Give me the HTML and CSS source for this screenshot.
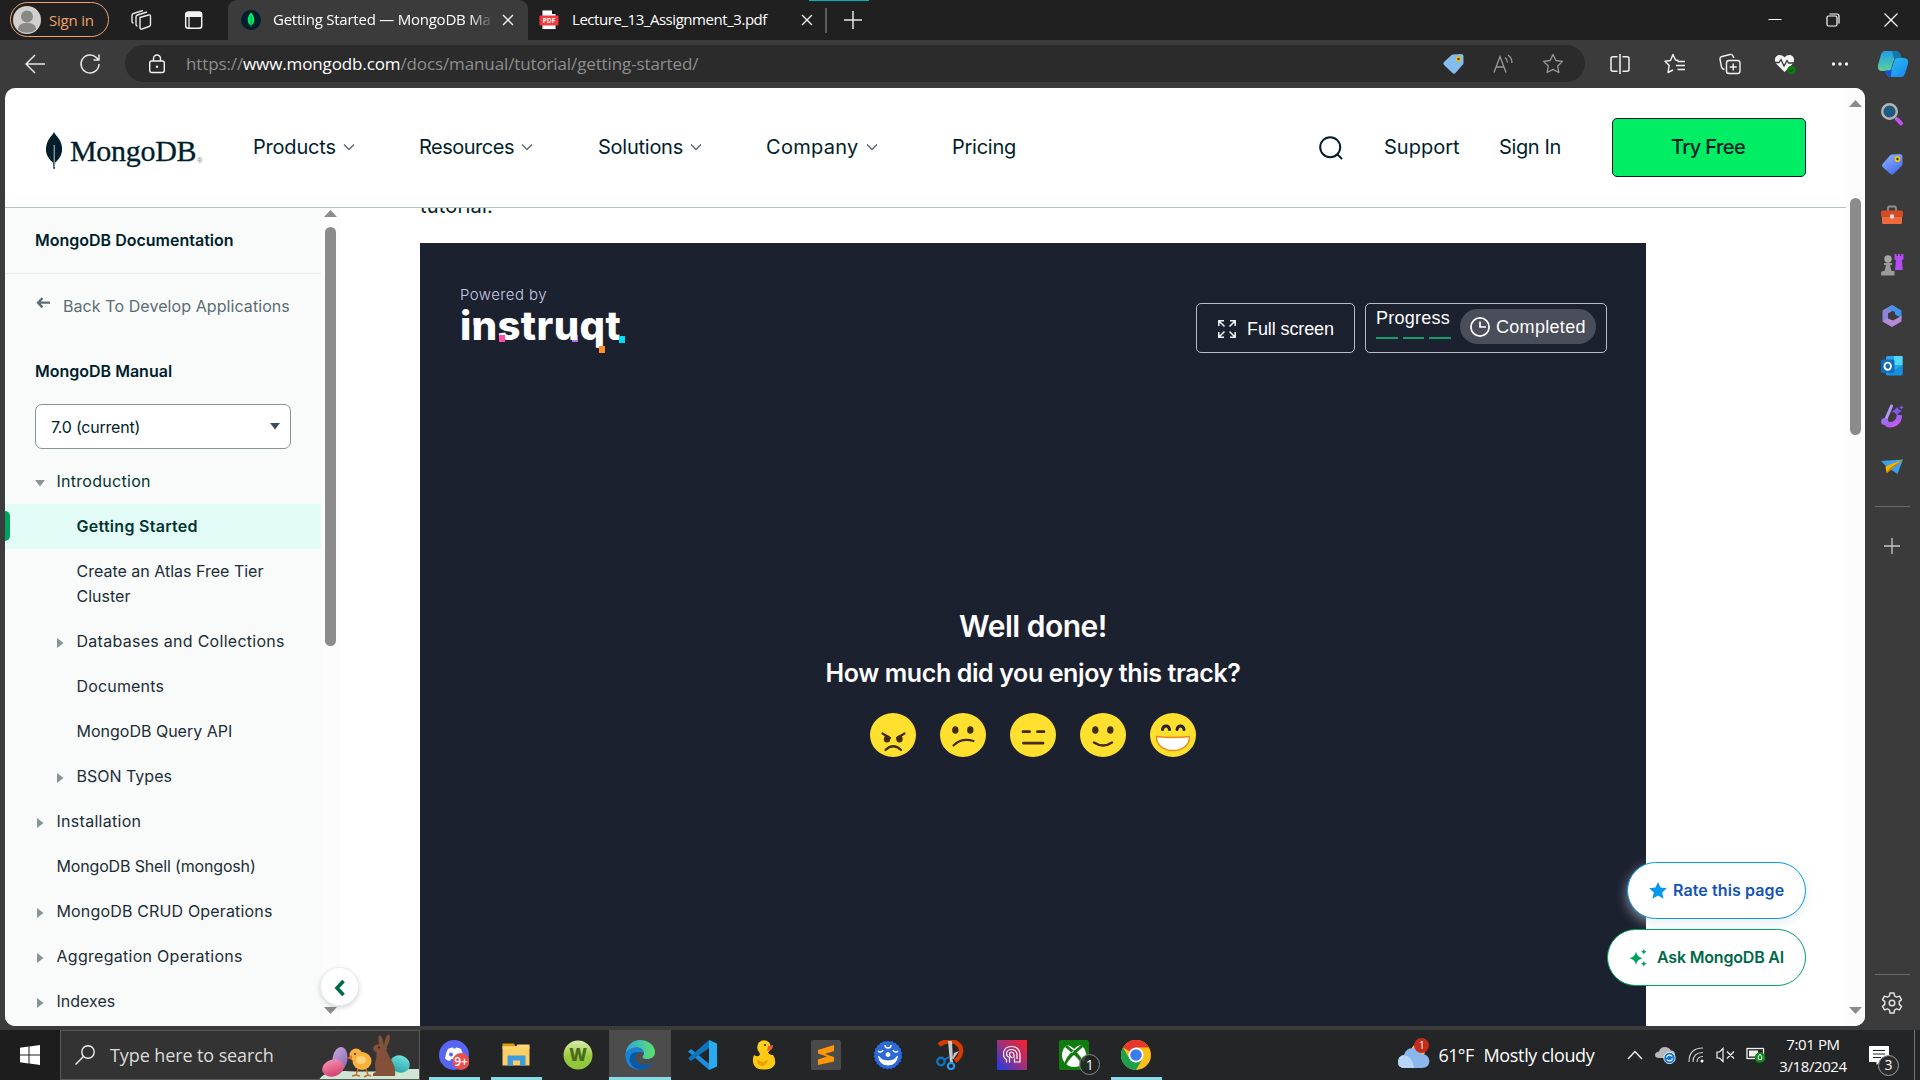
FILE: index.html
```
<!DOCTYPE html>
<html lang="en">
<head>
<meta charset="utf-8">
<title>Getting Started — MongoDB Manual</title>
<link rel="stylesheet" href="styles.css">
</head>
<body>
<svg class="defs" width="0" height="0">
  <defs>
    <linearGradient id="gTag" x1="0" y1="0" x2=".6" y2="1"><stop offset="0" stop-color="#8fb8ff"/><stop offset="1" stop-color="#4b6cf0"/></linearGradient>
    <linearGradient id="gCopA" x1="0" y1="0" x2="0" y2="1"><stop offset="0" stop-color="#1f9de8"/><stop offset="1" stop-color="#5fd09a"/></linearGradient>
    <linearGradient id="gCopB" x1="0" y1="0" x2="1" y2="1"><stop offset="0" stop-color="#2ac3f2"/><stop offset="1" stop-color="#1a86f0"/></linearGradient>
    <linearGradient id="gPurple" x1="0" y1="0" x2="1" y2="1"><stop offset="0" stop-color="#6b5cf0"/><stop offset="1" stop-color="#d65cf5"/></linearGradient>
    <linearGradient id="gEdge" x1="0" y1="0" x2="1" y2="0"><stop offset="0" stop-color="#2aa9e6"/><stop offset="1" stop-color="#5ee06a"/></linearGradient>
    <linearGradient id="gHead" x1="0" y1="1" x2="1" y2="0"><stop offset="0" stop-color="#1a3cf0"/><stop offset=".5" stop-color="#a0307a"/><stop offset="1" stop-color="#ff1f2a"/></linearGradient>
    <linearGradient id="gW" x1="0" y1="0" x2="0" y2="1"><stop offset="0" stop-color="#d9ecb0"/><stop offset=".55" stop-color="#9acb3c"/><stop offset="1" stop-color="#8cc63f"/></linearGradient>
    <linearGradient id="gPink" x1="0" y1="0" x2="0" y2="1"><stop offset="0" stop-color="#f48fb1"/><stop offset="1" stop-color="#d2406f"/></linearGradient>
    <linearGradient id="gLil" x1="0" y1="0" x2="1" y2="1"><stop offset="0" stop-color="#c9a8e0"/><stop offset="1" stop-color="#8a63ad"/></linearGradient>
    <linearGradient id="gTeal" x1="0" y1="0" x2="0" y2="1"><stop offset="0" stop-color="#6fe0dc"/><stop offset="1" stop-color="#2aa5ac"/></linearGradient>
  </defs>
</svg>

<div class="tabstrip">
  <div class="signin">
    <svg width="28" height="28" viewBox="0 0 28 28"><circle cx="14" cy="14" r="14" fill="#d2d0ce"/><circle cx="14" cy="10.5" r="6" fill="#8a8886"/><path d="M5 23.5c0-5 4-6.500 9-6.500s9 1.500 9 6.500A14 14 0 0 1 5 23.500z" fill="#8a8886"/></svg>
    <span>Sign in</span>
  </div>
  <span class="ico workspaces"><svg width="22" height="22" viewBox="0 0 22 22" fill="none" stroke="#e8e8e8" stroke-width="1.400"><path d="M10 8.500 18.500 6q2-.5 2 1.500v8q0 1.500-1.500 2l-7 2.500q-2 .5-2-1.500z"/><path d="M7.500 17q-1.500 0-1.500-1.500V8q0-1.500 1.500-2L17 3M3.500 14Q2 14 2 12.500V6.500Q2 5 3.500 4.500L13 1.500"/></svg></span>
  <span class="ico actions"><svg width="20" height="20" viewBox="0 0 20 20"><rect x="1.700" y="2.200" width="16" height="16" rx="2.500" fill="none" stroke="#f2f2f2" stroke-width="1.500"/><path d="M1.500 7V4q0-2.500 2.500-2.500h11.500Q18 1.500 18 4v3z" fill="#f2f2f2"/><path d="M5 7v11" stroke="#f2f2f2" stroke-width="1.300"/></svg></span>
  <div class="tab active">
    <svg width="20" height="20" viewBox="0 0 20 20"><circle cx="10" cy="10" r="10" fill="#001e2b"/><path d="M10 2.500c2.500 3 3.300 5 3.300 7.500 0 2.700-1.500 4.300-2.900 5.300L10.200 17h-.4l-.2-1.700C8.200 14.300 6.700 12.700 6.700 10c0-2.500.8-4.500 3.300-7.500z" fill="#00ed64"/><path d="M10.200 6v10" stroke="#00684a" stroke-width=".6"/></svg>
    <span class="tabtitle">Getting Started — MongoDB Ma</span>
    <svg class="close" width="12" height="12" viewBox="0 0 12 12" stroke="#f2f2f2" stroke-width="1.300"><path d="M1 1l10 10M11 1 1 11"/></svg>
  </div>
  <div class="tab">
    <svg width="20" height="20" viewBox="0 0 20 20"><path d="M3 0h10l4 4v15.500H3z" fill="#fff" stroke="#111" stroke-width=".8"/><path d="M13 0v4h4" fill="#111"/><rect x=".5" y="5.500" width="19" height="10" rx="1" fill="#f23a3a"/><text x="10" y="13" text-anchor="middle" class="pdf">PDF</text></svg>
    <span class="tabtitle2">Lecture_13_Assignment_3.pdf</span>
    <svg class="close" width="12" height="12" viewBox="0 0 12 12" stroke="#f2f2f2" stroke-width="1.300"><path d="M1 1l10 10M11 1 1 11"/></svg>
  </div>
  <span class="tabsep"></span>
  <span class="ico newtab"><svg width="18" height="18" viewBox="0 0 18 18" stroke="#e6e6e6" stroke-width="1.500"><path d="M9 0v18M0 9h18"/></svg></span>
  <div class="winbtns">
    <span class="ico"><svg width="14" height="14" viewBox="0 0 14 14"><path d="M.5 6.500h13" stroke="#fff"/></svg></span>
    <span class="ico"><svg width="14" height="14" viewBox="0 0 14 14" fill="none" stroke="#fff" stroke-width="1.200"><rect x="1" y="3" width="10" height="10" rx="1.500"/><path d="M3.500 1h7.500q2 0 2 2v7.500"/></svg></span>
    <span class="ico"><svg width="14" height="14" viewBox="0 0 14 14" stroke="#fff" stroke-width="1.200"><path d="M.5.500l13 13M13.500.500l-13 13"/></svg></span>
  </div>
  <span class="teal"></span>
</div>

<div class="toolbar">
  <span class="ico back"><svg width="20" height="20" viewBox="0 0 20 20" fill="none" stroke="#e6e6e6" stroke-width="1.500"><path d="M10 1 1 10l9 9M1 10h19"/></svg></span>
  <span class="ico reload"><svg width="22" height="22" viewBox="0 0 22 22" fill="none" stroke="#e6e6e6" stroke-width="1.500"><path d="M20 11a9 9 0 1 1-2.600-6.400L20 7M20 1.500V7h-5.500"/></svg></span>
  <div class="address">
    <span class="ico lock"><svg width="18" height="20" viewBox="0 0 18 20" fill="none" stroke="#f2f2f2" stroke-width="1.400"><rect x="1.700" y="7" width="14.600" height="11.500" rx="2"/><path d="M5.500 7V4.500a3.500 3.500 0 0 1 7 0V7"/><circle cx="9" cy="12.700" r="1.200" fill="#f2f2f2" stroke="none"/></svg></span>
    <span class="url">https://<b>www.mongodb.com</b>/docs/manual/tutorial/getting-started/</span>
    <span class="ico a1"><svg width="22" height="22" viewBox="0 0 22 22"><path d="M11 1.500 19 1q2.500 0 2.500 2v7q0 1-1 2l-7 8q-1.500 1.500-3 0l-8.500-8q-1.500-1.500 0-3l7-6.500q1-1 2-1z" fill="#83bcee"/><circle cx="16.500" cy="6" r="2.800" fill="#f2c100"/><circle cx="16.500" cy="6" r="1.200" fill="#4a3a00"/></svg></span>
    <span class="ico a2"><svg width="22" height="20" viewBox="0 0 22 20" fill="none" stroke="#9a9a9a" stroke-width="1.300"><path d="m2 18.500 6-16 6 16M4 13h8M13 3.500q2.500 2 2.500 5M16 1q4 3 4 8"/></svg></span>
    <span class="ico a3"><svg width="22" height="22" viewBox="0 0 22 22" fill="none" stroke="#9a9a9a" stroke-width="1.300" stroke-linejoin="round"><path d="m11 1.500 2.900 6 6.600.9-4.800 4.600 1.200 6.500-5.900-3.100-5.900 3.100 1.200-6.500L1.500 8.400l6.600-.9z"/></svg></span>
  </div>
  <div class="tools">
    <span class="ico"><svg width="20" height="20" viewBox="0 0 20 20" fill="none" stroke="#f2f2f2" stroke-width="1.500"><path d="M7.500 2.700H3q-2 0-2 2v10.600q0 2 2 2h4.500M12.500 2.700H17q2 0 2 2v10.600q0 2-2 2h-4.500M10 0v20"/></svg></span>
    <span class="ico"><svg width="22" height="22" viewBox="0 0 22 22" fill="none" stroke="#f2f2f2" stroke-width="1.400" stroke-linejoin="round"><path d="M14.500 7.500 11.500 7 9 1.500 6.500 7.500l-5.500.700L5.200 12.500 4 19.500l5-2.500"/><path d="M13.500 8.500H21M12 12.500h9M13.500 16.500H21"/></svg></span>
    <span class="ico"><svg width="22" height="22" viewBox="0 0 22 22" fill="none" stroke="#f2f2f2" stroke-width="1.400"><rect x="7.500" y="7.500" width="13.500" height="13" rx="2.500"/><path d="M14.200 10.500v7M10.700 14h7M5.500 16.500Q3 16 2.500 14L1 6.500Q.7 4 3 3.500L11 1.500q2.500-.5 3.300 2l.4 1.500"/></svg></span>
    <span class="ico"><svg width="22" height="22" viewBox="0 0 22 22"><path d="M10.500 19 2 10.500C-.5 7 1.500 2 5.500 2 8 2 9.500 3 10.500 4.500 11.500 3 13 2 15.500 2c4 0 6 5 3.500 8.500z" fill="#f4f4f4"/><path d="M1 9.500h4l2-3 3 6.500 3-5.500 1.500 2.500H20" fill="none" stroke="#3b3b3b" stroke-width="1.300"/><circle cx="17.500" cy="17" r="4.300" fill="#0f7b10"/><path d="m15.500 17 1.500 1.500 2.700-2.700" fill="none" stroke="#0a3d0a"/></svg></span>
    <span class="ico"><svg width="18" height="6" viewBox="0 0 18 6" fill="#f2f2f2"><circle cx="2.500" cy="3" r="1.700"/><circle cx="9" cy="3" r="1.700"/><circle cx="15.500" cy="3" r="1.700"/></svg></span>
  </div>
  <span class="ico copilot"><svg width="32" height="28" viewBox="0 0 32 28"><path d="M8 1h10q4 0 5.500 4l1 3h-5q-2 0-3 3l-2.500 8q-.7 2-2.500 2H5q-5 0-4-6L4 4.500Q5 1 8 1z" fill="url(#gCopA)"/><path d="M24 27H14q-4 0-5.500-5l-.5-1.500h4q2 0 3-3l2.500-7.500q1-2 3-2H27q5 0 4 6l-3 9.500q-1 3.500-4 3.500z" fill="url(#gCopB)"/><path d="M18 1q4 0 5.500 4l1 3h-5q-2 0-2.500 1L15 1z" fill="#1378a8"/><path d="M14 27q-4 0-5.500-5l-.5-1.500h4q2 0 2.700-2z" fill="#1b4fd0"/></svg></span>
</div>

<div class="middle">
  <div class="page">
    <div class="content">
      <header class="header">
        <div class="logo">
          <svg width="18" height="38" viewBox="0 0 18 38"><path d="M9 0c1.500 3 3 4 5 7 3.500 5.500 4 12 1.500 17-1.500 3-3.500 5-5.200 6.300L9.700 37H8.500l-.7-6.700C6 29 4 27 2.500 24 0 19 .7 12.500 4 7 6 4 7.500 3 9 0z" fill="#001e2b"/><path d="M9.200 13v22" stroke="#cfd6d9" stroke-width=".9"/></svg>
          <span class="word">MongoDB</span><span class="reg">®</span>
        </div>
        <nav class="nav">
          <a class="n1">Products <svg class="chev" width="12" height="8" viewBox="0 0 12 8"><path d="m1 1.500 5 5 5-5"/></svg></a>
          <a class="n2">Resources <svg class="chev" width="12" height="8" viewBox="0 0 12 8"><path d="m1 1.500 5 5 5-5"/></svg></a>
          <a class="n3">Solutions <svg class="chev" width="12" height="8" viewBox="0 0 12 8"><path d="m1 1.500 5 5 5-5"/></svg></a>
          <a class="n4">Company <svg class="chev" width="12" height="8" viewBox="0 0 12 8"><path d="m1 1.500 5 5 5-5"/></svg></a>
          <a class="n5">Pricing</a>
        </nav>
        <div class="actionsbar">
          <svg class="search" width="24" height="24" viewBox="0 0 24 24" fill="none" stroke="#001e2b" stroke-width="2"><circle cx="11.200" cy="11.200" r="10"/><path d="m18 18 5 5"/></svg>
          <a class="support">Support</a>
          <a class="login">Sign In</a>
          <a class="try">Try Free</a>
        </div>
      </header>
      <div class="body">
        <aside class="toc">
          <div class="toctitle">MongoDB Documentation</div>
          <div class="backlink"><svg width="15" height="12" viewBox="0 0 15 12" fill="none" stroke="#5c6c75" stroke-width="2.300"><path d="M6.500 1 2 5.700l4.500 4.700M2 5.700h12"/></svg><span>Back To Develop Applications</span></div>
          <div class="manual">MongoDB Manual</div>
          <div class="select"><span>7.0 (current)</span><svg width="10" height="7" viewBox="0 0 10 7"><path d="M0 0h10L5 6.500z" fill="#3d4f58"/></svg></div>
          <div class="item open w3"><svg width="10" height="7" viewBox="0 0 10 7"><path d="M0 0h10L5 6.500z"/></svg>Introduction</div>
          <div class="item sub current w3">Getting Started</div>
          <div class="item sub two">Create an Atlas Free Tier<br>Cluster</div>
          <div class="item sub w3"><svg width="7" height="10" viewBox="0 0 7 10"><path d="M0 0v10l6.500-5z"/></svg>Databases and Collections</div>
          <div class="item sub w2">Documents</div>
          <div class="item sub">MongoDB Query API</div>
          <div class="item sub"><svg width="7" height="10" viewBox="0 0 7 10"><path d="M0 0v10l6.500-5z"/></svg>BSON Types</div>
          <div class="item w3"><svg width="7" height="10" viewBox="0 0 7 10"><path d="M0 0v10l6.500-5z"/></svg>Installation</div>
          <div class="item wn">MongoDB Shell (mongosh)</div>
          <div class="item w2"><svg width="7" height="10" viewBox="0 0 7 10"><path d="M0 0v10l6.500-5z"/></svg>MongoDB CRUD Operations</div>
          <div class="item w3"><svg width="7" height="10" viewBox="0 0 7 10"><path d="M0 0v10l6.500-5z"/></svg>Aggregation Operations</div>
          <div class="item"><svg width="7" height="10" viewBox="0 0 7 10"><path d="M0 0v10l6.500-5z"/></svg>Indexes</div>
        </aside>
        <div class="tocscroll">
          <svg width="13" height="7" viewBox="0 0 13 7"><path d="M6.500 0 13 7H0z" fill="#8b8b8b"/></svg>
          <i></i>
          <svg class="down" width="13" height="7" viewBox="0 0 13 7"><path d="M6.500 7 13 0H0z" fill="#8b8b8b"/></svg>
          <div class="collapse"><svg width="12" height="18" viewBox="0 0 12 18" fill="none" stroke="#00684a" stroke-width="3.600"><path d="M9.500 2 3 9l6.500 7"/></svg></div>
        </div>
        <main class="doc">
          <p class="lead"><span>tutorial.</span></p>
          <section class="track">
            <div class="trackhead">
              <div class="brand">
                <span class="powered">Powered by</span>
                <div class="instruqt"><i class="sq s4"></i><i class="sq s5"></i><span>instruqt</span><i class="sq s1"></i><i class="sq s2"></i><i class="sq s3"></i></div>
              </div>
              <div class="full">
                <svg width="18" height="18" viewBox="0 0 18 18" fill="none" stroke="#f2f4f8" stroke-width="1.500"><path d="M.8 6V.800H6M12 .8h5.200V6M17.200 12v5.200H12M6 17.200H.8V12M1 1l5.500 5.500M17 1l-5.500 5.500M17 17l-5.500-5.500M1 17l5.500-5.500"/></svg>
                <span>Full screen</span>
              </div>
              <div class="progress">
                <div class="ptext"><span>Progress</span><div class="bars"><i></i><i></i><i></i></div></div>
                <div class="pill"><svg width="20" height="20" viewBox="0 0 20 20" fill="none" stroke="#fff" stroke-width="1.700"><circle cx="10" cy="10" r="9.100"/><path d="M10 4.500V10h6"/></svg><span>Completed</span></div>
              </div>
            </div>
            <h2>Well done!</h2>
            <h3>How much did you enjoy this track?</h3>
            <div class="faces">
              <svg viewBox="0 0 46 44"><ellipse cx="23" cy="22" rx="23" ry="22" fill="#ffe02f"/><g fill="#422b0d"><ellipse cx="17" cy="26" rx="3.200" ry="3.500"/><ellipse cx="29.500" cy="26" rx="3.200" ry="3.500"/></g><path d="m12.500 20.500 7.500 4.500M34.500 20.500 27 25M15.500 37q7.700-7.500 15.500 0" fill="none" stroke="#422b0d" stroke-width="2.200" stroke-linecap="round"/></svg>
              <svg viewBox="0 0 46 44"><ellipse cx="23" cy="22" rx="23" ry="22" fill="#ffe02f"/><g fill="#422b0d"><ellipse cx="15.300" cy="17" rx="3.200" ry="3.800"/><ellipse cx="30.300" cy="17" rx="3.200" ry="3.800"/></g><path d="M13.500 32.500q8-8 20-4.500" fill="none" stroke="#422b0d" stroke-width="2.200" stroke-linecap="round"/></svg>
              <svg viewBox="0 0 46 44"><ellipse cx="23" cy="22" rx="23" ry="22" fill="#ffe02f"/><path d="M13 18.700h6.500M27.500 18.700H34M13.500 30.200h19.500" fill="none" stroke="#422b0d" stroke-width="2.800" stroke-linecap="round"/></svg>
              <svg viewBox="0 0 46 44"><ellipse cx="23" cy="22" rx="23" ry="22" fill="#ffe02f"/><g fill="#422b0d"><ellipse cx="15.300" cy="17" rx="3.200" ry="3.800"/><ellipse cx="30.300" cy="17" rx="3.200" ry="3.800"/></g><path d="M14 29.500q9 6 18 0" fill="none" stroke="#422b0d" stroke-width="2.400" stroke-linecap="round"/></svg>
              <svg viewBox="0 0 46 44"><ellipse cx="23" cy="22" rx="23" ry="22" fill="#ffe02f"/><path d="M12.500 16.500q.5-3.500 3.500-3.500t3.500 3.500M27 16.500q.5-3.500 3.500-3.500t3.500 3.500" fill="none" stroke="#2a2020" stroke-width="3" stroke-linecap="round"/><path d="M6.500 23.500q16.500 2 33 0c.5 8.500-7.500 14-16.500 14s-17-5.500-16.500-14z" fill="#fff" stroke="#ee8a12" stroke-width="1.400"/></svg>
            </div>
          </section>
        </main>
        <div class="float rate"><svg width="18" height="17" viewBox="0 0 18 17"><path d="m9 0 2.500 5.600 6.300.6-4.600 4.200 1.300 6.300L9 13.500l-5.500 3.200 1.300-6.300L.2 6.200l6.300-.6z" fill="#0498ec"/></svg><span>Rate this page</span></div>
        <div class="float ask"><svg width="18" height="18" viewBox="0 0 18 18" fill="#00a35c"><path d="M7 2.500Q8 8 13.500 9.200 8 10.500 7 16 6 10.500.500 9.200 6 8 7 2.500zM14.800 0q.5 2.300 2.700 2.800-2.200.5-2.700 2.700-.5-2.200-2.700-2.700 2.200-.5 2.700-2.800zM14.800 12q.5 2.300 2.700 2.800-2.200.5-2.700 2.700-.5-2.200-2.700-2.700 2.200-.5 2.700-2.800z"/></svg><span>Ask MongoDB AI</span></div>
      </div>
    </div>
    <div class="pagescroll">
      <svg width="13" height="7" viewBox="0 0 13 7"><path d="M6.500 0 13 7H0z" fill="#8b8b8b"/></svg>
      <i></i>
      <svg class="down" width="13" height="7" viewBox="0 0 13 7"><path d="M6.500 7 13 0H0z" fill="#8b8b8b"/></svg>
    </div>
  </div>
  <div class="sidebar">
    <svg viewBox="0 0 24 24"><circle cx="9.500" cy="9.500" r="7.300" fill="#1f5a80" stroke="#b4b4b4" stroke-width="2.400"/><path d="m15.500 16 2 2" stroke="#b4b4b4" stroke-width="2.500"/><path d="m17.500 17.500 3.500 3.800" stroke="#c94df0" stroke-width="4" stroke-linecap="round"/></svg>
    <svg viewBox="0 0 24 24"><path d="M12 2.500 19.500 2q3 0 3 2.500v7q0 1.500-1 2.500l-8 8q-1.500 1.500-3 0L2.500 15Q1 13.500 2.500 12L10 3.500q1-1 2-1z" fill="url(#gTag)"/><circle cx="17.500" cy="7" r="2.900" fill="#f5c800"/><circle cx="17.500" cy="7" r="1.200" fill="#423800"/></svg>
    <svg viewBox="0 0 24 24"><path d="M8 8V5q0-1.500 1.500-1.500h5Q16 3.500 16 5v3" fill="none" stroke="#8f8f8f" stroke-width="1.800"/><path d="M1 9q0-1.500 1.500-1.500h19Q23 7.500 23 9v4.500H1z" fill="#d84c24"/><path d="M2 13.500h20v6q0 1.500-1.500 1.500h-17Q2 21 2 19.500z" fill="#f0693b"/><rect x="10" y="11.500" width="4" height="4" rx="1" fill="#e0e0e0"/></svg>
    <svg viewBox="0 0 24 24"><path d="M14.500 1h2.200v2H18V1h2v2h1.300V1h2.200v5l-1.500 1.500L22.700 17H15l1-9.500L14.500 6z" fill="#b64df2"/><circle cx="8" cy="6" r="3.700" fill="#a8a8a8"/><path d="M4 10h8v2h-2l1.500 6h3v4.500H1V20q0-1.500 2-2h1.500L6 12H4z" fill="#9a9a9a"/></svg>
    <svg viewBox="0 0 24 24"><path d="M12 1 2.500 6.500v11L8 20.500v-11L17 4z" fill="#8d85d8"/><path d="m12 1 9.500 5.500V14L15 10.500V8L8 5z" fill="#3f95ee"/><path d="M21.500 12v5.500L12 23l-9.500-5.500L8 14.500l5 2z" fill="#b68ad8"/><path d="m12 8.500 3.500 2v3.500L12 16l-3.500-2v-3.500z" fill="#3b3b3b"/></svg>
    <svg viewBox="0 0 24 24"><rect x="6" y="2" width="16.500" height="19" rx="1.500" fill="#28a8ea"/><path d="M14 2h8.500v9H14z" fill="#50d9ff"/><path d="M6 21 22.500 11v9q0 1.500-1.500 1.500H7z" fill="#1490df"/><rect x="1" y="5.500" width="13.500" height="13.500" rx="1.500" fill="#0f6cbd"/><ellipse cx="7.700" cy="12.200" rx="3.200" ry="3.600" fill="none" stroke="#fff" stroke-width="1.900"/></svg>
    <svg viewBox="0 0 24 24"><path d="M6 19.500q5 2.500 9 0t4.500-8.500" fill="none" stroke="url(#gPurple)" stroke-width="5.500"/><path d="M11.500 2 6 15" stroke="#b79af8" stroke-width="3" stroke-linecap="round"/><circle cx="4.700" cy="17.500" r="3.600" fill="#a06cf5"/><path d="m17 3 1.700 2.500 3 1.500-3 2L17 11.500 15 9l-3-1.500 3-2z" fill="#8258f0"/><path d="m21.500 1 .7 1.700 1.500.7-1.500.8-.7 1.600-.8-1.600-1.600-.8 1.600-.7z" fill="#8258f0"/></svg>
    <svg viewBox="0 0 24 24"><path d="M1 6 23 4.500 8 13z" fill="#39a2e8"/><path d="M23 4.500 17.500 19 10 14z" fill="#3a9df0"/><path d="M23 4.500 5.500 11.500 6.500 18z" fill="#f5b400"/><path d="M23 4.500 9 13.500l-2.500 5L11 15z" fill="#c88500"/></svg>
    <hr>
    <svg class="plus" viewBox="0 0 16 16" stroke="#c8c8c8" stroke-width="1.300"><path d="M8 0v16M0 8h16"/></svg>
    <hr class="h2">
    <svg class="gear" viewBox="0 0 22 22" fill="none" stroke="#e6e6e6" stroke-width="1.400" stroke-linejoin="round"><path d="M9 1h4l.6 3 2 1.100 2.900-1 2 3.500-2.300 2v2.800l2.300 2-2 3.500-2.900-1-2 1.100-.6 3H9l-.6-3-2-1.100-2.900 1-2-3.500 2.300-2V9.600l-2.300-2 2-3.500 2.900 1 2-1.100z"/><circle cx="11" cy="11" r="2.800"/></svg>
  </div>
</div>

<div class="taskbar">
  <span class="start"><svg width="20" height="20" viewBox="0 0 20 20" fill="#fff"><path d="M0 2.800 8.500 1.600v7.900H0zM9.500 1.500 20 0v9.500H9.500zM0 10.500h8.500v7.900L0 17.200zM9.500 10.500H20V20L9.500 18.500z"/></svg></span>
  <div class="searchbox">
    <svg width="20" height="20" viewBox="0 0 20 20" fill="none" stroke="#f0f0f0" stroke-width="1.400"><circle cx="13" cy="7" r="6.200"/><path d="M8.500 11.500.500 19.500"/></svg>
    <span>Type here to search</span>
    <svg class="easter" width="100" height="46" viewBox="0 0 100 46"><path d="M0 46q4-9 26-9 20 1 38 0 10-2 24-2h12v12z" fill="#cfe6d2"/><ellipse cx="21" cy="25" rx="7.500" ry="12" transform="rotate(8 21 25)" fill="url(#gLil)"/><ellipse cx="14" cy="34" rx="11" ry="8.500" transform="rotate(-18 14 34)" fill="url(#gPink)"/><ellipse cx="81" cy="30" rx="10" ry="8.500" transform="rotate(20 81 30)" fill="url(#gTeal)"/><g fill="#f9b13b"><circle cx="37" cy="21" r="6.500"/><ellipse cx="43" cy="27" rx="9.500" ry="9"/><path d="m28 24 5-3v5z" fill="#e8722a"/><path d="m39 35-2 6m0 0-4 1m4-1 4 1M47 35l2 6m0 0-4 2m4-2 3 1" stroke="#c8701f" stroke-width="1.400"/></g><circle cx="36" cy="20" r="1" fill="#333"/><ellipse cx="42" cy="26" rx="5" ry="4" fill="#ffd27a"/><g fill="#83503a"><ellipse cx="62" cy="8" rx="2.200" ry="7" transform="rotate(-12 62 8)"/><ellipse cx="68" cy="7" rx="2.200" ry="7" transform="rotate(16 68 7)"/><ellipse cx="61" cy="14.500" rx="7" ry="4.500"/><path d="M58 16q8-3 10 2 3 6 6 11 3 6 2 13H54q-1-3 3-4-2-8 0-13z"/></g><circle cx="60" cy="13.500" r=".9" fill="#2b1710"/></svg>
  </div>
  <div class="apps">
    <span class="app run"><svg viewBox="0 0 30 30"><circle cx="15" cy="15" r="15" fill="#5865f2"/><path d="M9 9q3-2 5-1.500l.5 1h2l.5-1q2-.5 5 1.500 2.500 5 2.500 9.500-2 2-4.500 2.500l-1-2h-7l-1 2Q8 20.500 6 18.500 6.500 13 9 9z" fill="#fff"/><circle cx="12" cy="14.500" r="2" fill="#5865f2"/><circle cx="22" cy="21.500" r="8.500" fill="#ea4f4f"/><text x="22" y="25.800" text-anchor="middle" class="t9">9+</text></svg></span>
    <span class="app run"><svg viewBox="0 0 30 30"><path d="M1.500 3.500H13l2 3.500H1.500z" fill="#e29b0a"/><path d="M1.500 6.500h27v19h-27z" fill="#fcd067"/><path d="M6.500 15.500h18v10h-5.500v-5h-7v5H6.500z" fill="#3d9be0"/><path d="M1.500 6.500H15l1.500-2h12v4h-27z" fill="#ffd873"/></svg></span>
    <span class="app"><svg viewBox="0 0 30 30"><circle cx="15" cy="15" r="14.500" fill="url(#gW)"/><text x="15" y="21" text-anchor="middle" class="tw">W</text></svg></span>
    <span class="app on"><svg viewBox="0 0 30 30"><path d="M.5 14C1.500 5 8 0 15 0c9 0 15 6 15 12 0 5-4 7-8 7-3.500 0-4.500-1-4.500-2s1.500-1.500 1.500-4c0-3-3-5.500-7.500-5.500C6 7.500 2 10.500.5 14z" fill="url(#gEdge)"/><path d="M.500 14Q3 7.500 11 7.500c4.500 0 8 2.500 8 5.500-6-3-9 1-9 5 0 6 6 10 12.500 9Q19 30 15 30C6 30-.5 23 .5 14z" fill="#1b82d8"/><path d="M10 18c0-3 1.500-5 3.500-6Q4 11 4.500 21 8 29 15 30q8 0 13-7-5 2.500-10 1.500c-5-1-8-3.500-8-6.500z" fill="#0c59a4"/></svg></span>
    <span class="app"><svg viewBox="0 0 30 30"><path d="m4 9 19 15.500L22 30 1 11.500z" fill="#1a8fe0"/><path d="m22 0-21 18.500L4 21 22 8z" fill="#0b76bd"/><path d="m22 0 8 3.500v23L22 30z" fill="#2aa9f5"/></svg></span>
    <span class="app"><svg viewBox="0 0 30 30"><circle cx="15" cy="7" r="6.800" fill="#ffcf1f"/><path d="m19 6 5-1q0 6-6 6z" fill="#e8622a"/><path d="M9 10h9q1 5 6 5 3 4 2 9-2 5.500-11 5.500T4.500 24Q3 19 5 15q5 3 6-1z" fill="#ffc914"/><path d="M8 19q6 6 11 0-1 7-6 7t-5-7z" fill="#e6a400"/><circle cx="16" cy="5" r="1" fill="#222"/></svg></span>
    <span class="app"><svg viewBox="0 0 30 30"><rect width="30" height="30" rx="2" fill="#4a4a4a"/><path d="m7 10 16-5v6l-9 3 9 3v4.500L7 25v-5.500l9-3-9-3z" fill="#ff9800"/></svg></span>
    <span class="app"><svg viewBox="0 0 30 30"><circle cx="15" cy="15" r="14.300" fill="#2d6ad8" stroke="#0d1c40" stroke-width="1.200" stroke-dasharray="2 2"/><g fill="none" stroke="#fff"><circle cx="15" cy="14.500" r="2" fill="#fff"/><path d="M5.500 16q1 9 9.500 9t9.500-9q-3 5-9.500 5t-9.500-5z" fill="#fff"/><path d="M5 11a3 3 0 0 0 5-1M20 10a3 3 0 0 0 5 1M12 5a3 3 0 0 0 6 0" stroke-width="1.500"/></g></svg></span>
    <span class="app"><svg viewBox="0 0 30 30"><path d="M4 5Q12-1 20 2q7 4 6 10t-6 9" fill="none" stroke="#d83b01" stroke-width="4.500"/><path d="M13 1h4l1 22h-3zM17 21l7-10-5 2z" fill="#c9c9c9"/><circle cx="6" cy="21.500" r="3.700" fill="none" stroke="#1172be" stroke-width="2.400"/><circle cx="16" cy="26" r="3.200" fill="none" stroke="#2b98e8" stroke-width="2.200"/><path d="m9 20 5-3" stroke="#1172be" stroke-width="2"/></svg></span>
    <span class="app"><svg viewBox="0 0 30 30"><path d="M0 0h30v30H0z" fill="url(#gHead)"/><path d="M9.500 22.500v-3Q6.500 18 6.500 13.500 7 6.500 14.500 6.500T23 14v8h-5.500v-3.500M12.500 22.500v-5Q9.500 16.500 9.500 13.500q.5-4 5-4t5.500 4.500v5M15.500 18q-3-1-3-4 0-2 2-2t2.500 3v3" fill="none" stroke="#fff" stroke-width="1.200"/></svg></span>
    <span class="app xbox"><svg viewBox="0 0 30 30"><rect width="30" height="30" rx="2" fill="#107c10"/><circle cx="15" cy="15" r="12" fill="#fff"/><path d="M7 5q4 0 8 4 4-4 8-4-4-3-8-3T7 5zM15 10Q7 16 5 25l1.500 1Q10 19 15 15q5 4 8.500 11l1.500-1Q23 16 15 10zM8 5l7 6-2 2-7-6zM22 5l-7 6 2 2 7-6z" fill="#107c10"/></svg><b>1</b></span>
    <span class="app run"><svg viewBox="0 0 30 30"><circle cx="15" cy="15" r="15" fill="#fbc116"/><path d="M15 15 2 7.500A15 15 0 0 1 28 7.500H15z" fill="#e8382c"/><path d="M15 15 8.500 18.700 2 7.500A15 15 0 0 0 15 30l6.500-11.300z" fill="#1fa04c"/><circle cx="15" cy="15" r="7.500" fill="#fff"/><circle cx="15" cy="15" r="5.800" fill="#3b7de8"/></svg></span>
  </div>
  <div class="weather">
    <span class="wico"><svg width="32" height="28" viewBox="0 0 32 28"><circle cx="20" cy="10" r="7" fill="#f5b83a"/><path d="M7 27q-7 0-7-6t6-7q2-7 9-7 6 0 8.500 6 7 0 8 7-.5 7-7.500 7z" fill="#8ab8ec"/><path d="M7 27q-7 0-7-6t6-7q9 2 10 13z" fill="#b9d5f5"/></svg><b>1</b></span>
    <span class="deg">61°F</span><span class="cond">Mostly cloudy</span>
  </div>
  <div class="tray">
    <span class="ico t1"><svg width="16" height="10" viewBox="0 0 16 10" fill="none" stroke="#f2f2f2" stroke-width="1.400"><path d="m1 9 7-7.500L15 9"/></svg></span>
    <span class="ico t2"><svg width="21" height="18" viewBox="0 0 21 18"><path d="M4 12q-4 0-4-3t4-3.500Q5 1 10 1q4 0 6 3.500 4 0 4 4T15 12z" fill="#b8b8b8"/><circle cx="14.500" cy="12" r="5.700" fill="#1677d2" stroke="#fff" stroke-width=".8"/><path d="M11.500 11.500a3 3 0 0 1 5.500-1M17.500 12.500a3 3 0 0 1-5.500 1" fill="none" stroke="#fff" stroke-width="1.300"/></svg></span>
    <span class="ico t3"><svg width="16" height="16" viewBox="0 0 16 16" fill="none" stroke="#d8d8d8" stroke-width="1.100"><path d="M1 15Q1 1 15 1M5 15Q5 5.500 15 5.500M9 15q0-5.500 6-5.500" /><circle cx="14" cy="14" r="1.500" fill="#fff" stroke="none"/></svg></span>
    <span class="ico t4"><svg width="19" height="16" viewBox="0 0 19 16" fill="none" stroke="#f2f2f2" stroke-width="1.200"><path d="M1 5h2.500L7 1.500v13L3.500 11H1zM11 4.500l7 7M18 4.500l-7 7"/></svg></span>
    <span class="ico t5"><svg width="20" height="16" viewBox="0 0 20 16"><rect x="1" y="1.500" width="16.500" height="10" fill="none" stroke="#f2f2f2" stroke-width="1.300"/><path d="M3 3.500h9v6H3z" fill="#f2f2f2"/><circle cx="14" cy="10.500" r="5.300" fill="#128a1c"/><path d="M14 7q3 3 1.500 5.500h-3Q11 10 14 7z" fill="none" stroke="#fff"/></svg></span>
    <div class="clock"><span>7:01 PM</span><span>3/18/2024</span></div>
    <span class="note"><svg width="20" height="19" viewBox="0 0 20 19"><path d="M0 0h20v16h-9l-3.500 3v-3H0z" fill="#fff"/><path d="M4 4.500h12M4 8h12M4 11.500h8" stroke="#222"/></svg><b>3</b></span>
    <span class="desk"></span>
  </div>
</div>
</body>
</html>
```
FILE: styles.css
```
* { box-sizing: border-box; }
body { margin: 0; width: 1920px; height: 1080px; overflow: hidden; display: flex; flex-direction: column; background: #3b3b3b; font-family: "Open Sans", sans-serif; color: #fff; }
svg { display: block; flex: none; }
.defs { position: absolute; }
.ico { display: flex; align-items: center; justify-content: center; flex: none; }

/* Tab strip */
.tabstrip { position: relative; height: 40px; flex: none; display: flex; align-items: center; background: #202020; font-size: 15px; white-space: nowrap; }
.signin { margin-left: 10px; width: 99px; height: 35px; margin-top: -1px; border: 1.5px solid #f0a46c; border-radius: 18px; display: flex; align-items: center; padding-left: 2px; color: #f0a46c; }
.signin span { margin-left: 8px; letter-spacing: -.2px; }
.workspaces { width: 64px; }
.actions { width: 42px; }
.tab { height: 40px; display: flex; align-items: center; width: 299px; padding-left: 11px; }
.tab.active { margin-left: 13px; width: 300px; padding-left: 13px; background: #3b3b3b; border-radius: 9px 9px 0 0; }
.tabtitle, .tabtitle2 { margin-top: -2px; }
.tabtitle { margin-left: 12px; width: 221px; letter-spacing: -.23px; -webkit-mask-image: linear-gradient(90deg, #000 89%, transparent 100%); mask-image: linear-gradient(90deg, #000 89%, transparent 100%); }
.tabtitle2 { margin-left: 13px; width: 221px; letter-spacing: -.45px; }
.tab .close { margin-left: 8px; }
.pdf { font: 700 6.500px "Open Sans", sans-serif; fill: #fff; }
.tabsep { width: 1.500px; height: 25px; background: #5c5c5c; margin-left: -2px; }
.newtab { width: 52px; }
.winbtns { margin-left: auto; display: flex; height: 40px; }
.winbtns .ico { width: 58px; }
.teal { position: absolute; left: 809px; top: 0; width: 60px; height: 1px; background: #00b3c4; }

/* Toolbar */
.toolbar { height: 48px; flex: none; display: flex; align-items: center; background: #3b3b3b; }
.back { width: 70px; }
.reload { width: 40px; }
.address { margin-left: 15px; width: 1460px; height: 37px; margin-top: -1px; border-radius: 19px; background: #2b2b2b; display: flex; align-items: center; }
.lock { width: 64px; }
.url { margin-left: -3px; width: 1242px; font-size: 17px; letter-spacing: -.12px; color: #8e8e8e; white-space: nowrap; }
.url b { font-weight: 400; color: #fff; }
.a1, .a2, .a3 { width: 50px; }
.tools { display: flex; margin-left: 7px; }
.tools .ico { width: 55.200px; }
.copilot { margin-left: 9px; width: 32px; }

/* Browser body */
.middle { height: 942px; flex: none; display: flex; }
.page { margin-left: 5px; width: 1860px; height: 938px; border-radius: 10px; overflow: hidden; background: #fff; display: flex; color: #001e2b; font-family: Inter, "Liberation Sans", sans-serif; }
.content { width: 1841px; height: 938px; display: flex; flex-direction: column; }
.pagescroll, .tocscroll { width: 19px; background: #fcfcfc; display: flex; flex-direction: column; align-items: center; }
.pagescroll { padding-top: 12px; }
.pagescroll i { width: 11px; height: 237px; margin-top: 91px; border-radius: 6px; background: #8b8b8b; }
.down { margin-top: auto; margin-bottom: 12px; }

/* Site header */
.header { height: 120px; flex: none; border-bottom: 1px solid #b3c3bf; display: flex; align-items: center; font-size: 20px; white-space: nowrap; }
.logo { margin-left: 40px; width: 208px; height: 38px; margin-top: 6px; display: flex; align-items: center; }
.word { margin: 1px 0 0 7px; font: 30px "Liberation Serif", serif; letter-spacing: -.3px; -webkit-text-stroke: .3px #001e2b; }
.reg { font: 7px "Liberation Sans", sans-serif; color: #6b7a82; margin-top: 20px; margin-left: 1px; }
.nav { display: flex; width: 1066px; margin-top: -2px; }
.nav a { display: flex; align-items: center; gap: 7px; }
.chev { fill: none; stroke: #5c6c75; stroke-width: 1.500; }
.n1 { width: 166px; letter-spacing: -.2px; }
.n2 { width: 179px; letter-spacing: -.5px; }
.n3 { width: 168px; letter-spacing: -.25px; }
.n4 { width: 186px; letter-spacing: .3px; }
.n5 { letter-spacing: -.26px; }
.actionsbar { display: flex; align-items: center; }
.support, .login { margin-top: -2px; }
.support { margin-left: 41px; width: 115px; }
.login { width: 113px; letter-spacing: -.37px; }
.try { width: 194px; height: 59px; border: 1px solid #001e2b; border-radius: 5px; background: #00ed64; display: flex; align-items: center; justify-content: center; font-weight: 500; letter-spacing: -.6px; padding: 0 2px 1px 0; }

/* Table of contents */
.body { position: relative; height: 818px; display: flex; }
.toc { width: 316px; background: #f9fbfa; font-size: 16px; white-space: nowrap; overflow: hidden; }
.toctitle { height: 66px; line-height: 65px; padding-left: 30px; border-bottom: 1px solid #e8edeb; font-weight: 600; }
.backlink { height: 66px; display: flex; align-items: center; padding: 0 0 2px 31px; color: #5c6c75; letter-spacing: .08px; }
.backlink svg { margin-top: -6px; }
.backlink span { margin-left: 12px; }
.manual { height: 64px; line-height: 63px; padding-left: 30px; font-weight: 600; }
.select { margin-left: 30px; width: 256px; height: 45px; border: 1px solid #889397; border-radius: 7px; background: #fff; display: flex; align-items: center; justify-content: space-between; padding: 0 10px 0 15px; letter-spacing: -.23px; }
.item { position: relative; height: 45px; line-height: 45px; padding-left: 51.500px; color: #1c2d38; }
.select + .item { margin-top: 10px; }
.item svg { position: absolute; left: 32px; top: 19px; fill: #889397; }
.item.sub { padding-left: 71.500px; }
.item.sub svg { left: 52px; }
.item.open { color: #023430; }
.item.open svg { left: 30px; top: 21px; }
.item.two { height: 70px; line-height: 25px; padding-top: 10px; }
.item.current { background: #e3fcf7; color: #023430; font-weight: 600; }
.item.current::before { content: ""; position: absolute; left: 0; top: 7px; width: 5px; height: 30px; background: #00a35c; border-radius: 0 5px 5px 0; }
.w3 { letter-spacing: .28px; }
.w2 { letter-spacing: .16px; }
.wn { letter-spacing: -.16px; }
.tocscroll { position: relative; padding-top: 2px; }
.tocscroll i { width: 11px; height: 419px; margin-top: 10px; border-radius: 6px; background: #8b8b8b; }
.collapse { position: absolute; left: -1px; bottom: 20px; width: 39px; height: 39px; border-radius: 50%; background: #fff; border: 1px solid #e8edeb; box-shadow: 0 2px 5px rgba(0, 30, 43, .18); display: flex; align-items: center; justify-content: center; padding-top: 3px; }

/* Document */
.doc { width: 1226px; margin-left: 80px; }
.lead { margin: 0; height: 35px; overflow: hidden; font-size: 20px; line-height: 24px; }
.lead span { display: block; margin-top: -14px; letter-spacing: .2px; }
.track { height: 783px; background: #1c2130; color: #fff; }
.trackhead { display: flex; height: 140px; padding-top: 40px; }
.brand { width: 776px; padding-left: 40px; }
.powered { display: block; font-weight: 300; font-size: 15px; line-height: 24px; letter-spacing: .42px; color: #c5cae0; }
.instruqt { position: relative; width: 170px; font: 800 40px/44px Inter, sans-serif; letter-spacing: .4px; margin-top: -3px; }
.instruqt span { position: relative; }
.sq { position: absolute; width: 6px; height: 7px; }
.s1 { left: 39px; top: 31px; background: #ff4fa8; }
.s2 { left: 139px; top: 42px; background: #ff8f2b; }
.s3 { left: 159px; top: 32px; background: #00dcf5; }
.s4 { left: 13px; top: 14px; background: #a971ff; }
.s5 { left: 112px; top: 31px; background: #a971ff; }
.full, .progress { height: 50px; margin-top: 20px; border: 1px solid #b9bcc5; border-radius: 5px; display: flex; font: 18px "Liberation Sans", sans-serif; }
.full { width: 159px; align-items: center; padding: 2px 0 0 21px; letter-spacing: -.1px; }
.full span { margin-left: 11px; }
.progress { width: 242px; margin-left: 10px; padding: 5px 0 0 10px; }
.ptext { width: 84px; letter-spacing: .25px; line-height: 19px; }
.bars { display: flex; gap: 5px; margin-top: 9px; }
.bars i { width: 21.500px; height: 2px; background: #159c6c; }
.pill { width: 136px; height: 35px; border-radius: 18px; background: #4a4e5b; display: flex; align-items: center; padding-left: 10px; letter-spacing: .3px; }
.pill span { margin: 1px 0 0 6px; }
h2, h3 { margin: 0; text-align: center; font-weight: 600; }
h2 { font-size: 30px; line-height: 40px; margin-top: 223px; letter-spacing: -.5px; }
h3 { font-size: 25px; line-height: 36px; margin-top: 9px; letter-spacing: -.39px; }
.faces { display: flex; justify-content: center; gap: 24px; margin-top: 22px; }
.faces svg { width: 46px; height: 44px; }
.float { position: absolute; right: 40px; height: 57px; border-radius: 29px; background: #fff; display: flex; align-items: center; font-weight: 600; font-size: 16px; white-space: nowrap; }
.rate { bottom: 107px; width: 179px; border: 1px solid #0498ec; padding-left: 21px; color: #1254b7; letter-spacing: .1px; box-shadow: 0 4px 12px rgba(210, 225, 235, .55); }
.rate span { margin: -1px 0 0 6px; }
.ask { bottom: 40px; width: 199px; border: 1px solid #00a35c; padding-left: 21px; color: #00684a; letter-spacing: -.19px; }
.ask span { margin: -1px 0 0 10px; }

/* Edge sidebar */
.sidebar { width: 55px; height: 942px; padding: 14px 1px 0 0; display: flex; flex-direction: column; align-items: center; }
.sidebar svg { width: 24px; height: 24px; margin-bottom: 26.400px; }
.sidebar hr { width: 35px; height: 1px; border: 0; margin: 1px 0 31px; background: #6a6a6a; }
.sidebar .plus { width: 16px; height: 16px; margin: 0; }
.sidebar .h2 { margin: auto 0 17px; }
.sidebar .gear { width: 22px; height: 22px; margin-bottom: 16px; }

/* Taskbar */
.taskbar { height: 50px; flex: none; display: flex; background: #242526; }
.start { width: 60px; background: #1d1d1d; display: flex; align-items: center; justify-content: center; }
.searchbox { width: 360px; border: 1px solid #5a5a5a; background: #333; display: flex; align-items: center; padding-left: 14px; font-size: 18px; color: #dcdcdc; overflow: hidden; }
.searchbox span { margin-left: 15px; width: 211px; letter-spacing: -.1px; white-space: nowrap; }
.easter { margin-top: 4px; }
.apps { display: flex; padding-left: 2.500px; }
.app { position: relative; width: 62.080px; height: 50px; display: flex; align-items: center; justify-content: center; }
.app > svg { width: 30px; height: 30px; }
.app.on { background: #4c4c4c; border-bottom: 3px solid #85dbe8; }
.app.on svg { margin-top: 3px; }
.app.run::after { content: ""; position: absolute; left: 6px; bottom: 0; width: 51px; height: 3px; background: #85dbe8; }
.t9 { font: 600 12px "Open Sans", sans-serif; fill: #fff; }
.tw { font: 800 17px "Open Sans", sans-serif; fill: #4a6b1c; }
.xbox b { position: absolute; left: 36px; top: 24px; width: 21px; height: 21px; border: 1px solid #8a8a8a; border-radius: 50%; background: rgba(34, 34, 34, .85); font: 14px/19px "Open Sans", sans-serif; text-align: center; }
.weather { margin-left: 231px; display: flex; align-items: center; font-size: 18px; white-space: nowrap; }
.wico { position: relative; width: 32px; }
.wico b { position: absolute; right: 1px; top: -3px; width: 15px; height: 15px; border-radius: 50%; background: #c42b1c; font: 10px/15px "Open Sans", sans-serif; text-align: center; }
.deg { margin-left: 8px; letter-spacing: -.6px; width: 45px; }
.cond { letter-spacing: -.33px; width: 112px; }
.tray { margin-left: auto; display: flex; align-items: center; }
.t1 { width: 30px; } .t2 { width: 30px; } .t3 { width: 31px; } .t4 { width: 28px; } .t5 { width: 34px; }
.clock { width: 80px; display: flex; flex-direction: column; text-align: center; font-size: 15px; line-height: 22px; letter-spacing: -.4px; margin-top: -1px; }
.note { position: relative; margin-left: 16px; width: 45px; }
.note b { position: absolute; left: 9px; top: 9px; width: 21px; height: 21px; border: 1px solid #a0a0a0; border-radius: 50%; background: #2b2b2b; font: 14px/18px "Open Sans", sans-serif; text-align: center; }
.desk { width: 1px; height: 50px; background: #777; margin-right: 5px; }
```
